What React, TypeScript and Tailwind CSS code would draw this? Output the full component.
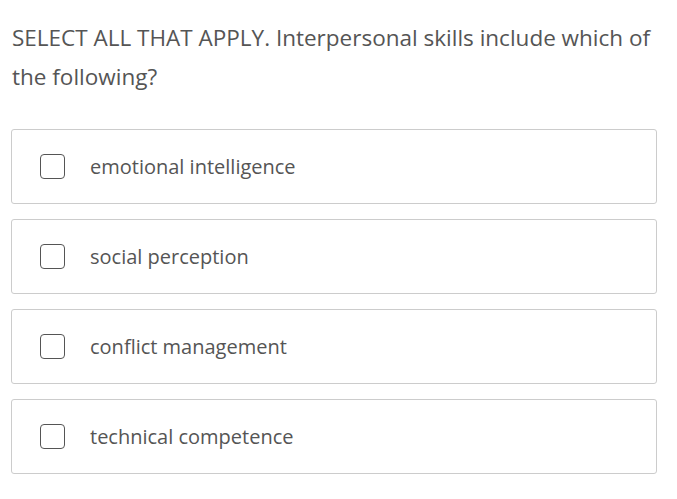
const options = [
  "emotional intelligence",
  "social perception",
  "conflict management",
  "technical competence",
];

export default function App() {
  return (
    <div
      className="bg-white w-[677px] h-[499px] px-[11px] pt-[18px] text-[#555]"
      style={{ fontFamily: '"Open Sans", sans-serif' }}
    >
      <p className="text-[22.5px] leading-[39px] pl-[1px] pr-[4px]">
        SELECT ALL THAT APPLY. Interpersonal skills include which of the following?
      </p>
      <div className="mt-[33px] flex flex-col gap-[15px] w-[646px]">
        {options.map((o) => (
          <label
            key={o}
            className="flex items-center h-[75px] border border-[#ccc] rounded-[3px] pl-[28px]"
          >
            <span className="w-[25px] h-[25px] border border-[#555] rounded-[4px] shrink-0" />
            <span className="ml-[25px] text-[20px]">{o}</span>
          </label>
        ))}
      </div>
    </div>
  );
}
